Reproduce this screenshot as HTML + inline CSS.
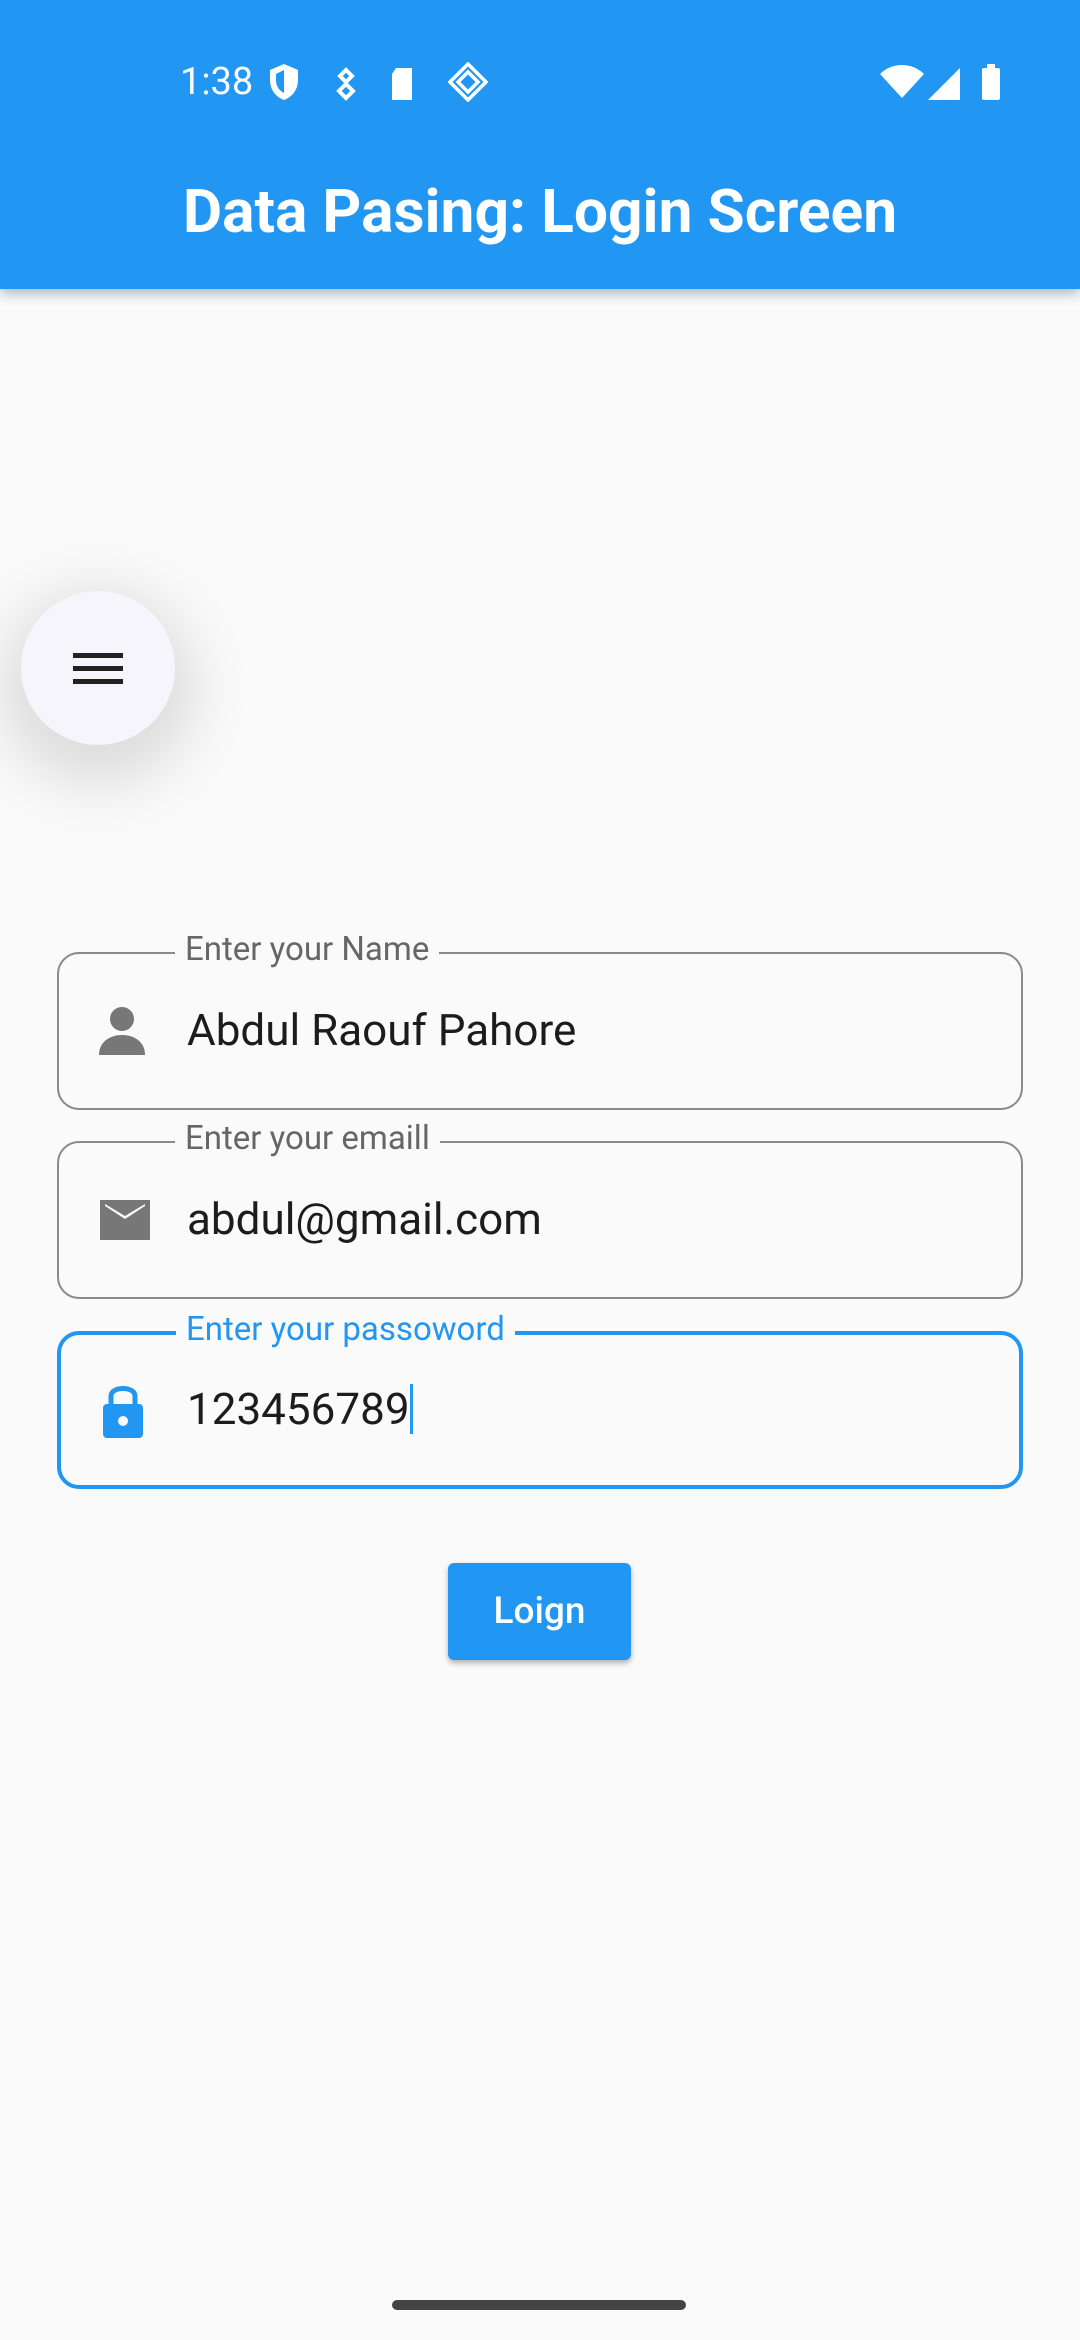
<!DOCTYPE html>
<html><head><meta charset="utf-8"><style>
*{margin:0;padding:0;box-sizing:border-box}
body{width:1080px;height:2340px;background:#fafafa;font-family:"Roboto","Liberation Sans",sans-serif;position:relative;overflow:hidden}
.bar{position:absolute;left:0;top:0;width:1080px;height:289px;background:#2196F3;box-shadow:0 4px 12px rgba(0,0,0,.3)}
.title{position:absolute;left:0;width:1080px;top:176px;text-align:center;color:#fff;font-size:60.5px;font-weight:bold}
.time{position:absolute;left:180px;top:60px;color:#fff;font-size:38px}
.fab{position:absolute;left:21px;top:591px;width:154px;height:154px;border-radius:50%;background:#f6f5fc;box-shadow:0 20px 60px 20px rgba(0,0,0,.12)}
.fab i{position:absolute;left:52px;width:50px;height:5px;background:#222}
.field{position:absolute;left:57px;width:966px;height:158px;border:2.5px solid #8a8a8a;border-radius:22px}
.field.f{border:4px solid #2196F3}
.lbl{position:absolute;left:116px;top:-24px;background:#fafafa;padding:0 10px;font-size:33px;color:#666}
.f .lbl{color:#2196F3;left:115px;top:-25px}
.val{position:absolute;left:128px;top:50px;font-size:44px;color:#1c1c1c}
.f .val{left:126px;top:48px}
.ic{position:absolute;left:38px;top:49px}
.btn{position:absolute;left:448px;top:1563px;width:183px;height:97px;background:#2196F3;border-radius:6px;color:#fff;font-size:37px;font-weight:500;text-align:center;line-height:97px;box-shadow:0 3px 6px rgba(0,0,0,.3)}
.home{position:absolute;left:392px;top:2300px;width:294px;height:10px;border-radius:5px;background:#444}
</style></head><body>
<div class="bar">
<div class="time">1:38</div>
<svg style="position:absolute;left:268px;top:62px" width="200" height="42" viewBox="0 0 200 42" fill="#fff">
<path d="M16 2 L30 8 V18 C30 28 24 35 16 38 C8 35 2 28 2 18 V8 Z M16 8 L8 12 V18 C8 25 12 29 16 31 Z" fill-rule="evenodd"/>
<path d="M78 8 l6 6 -6 6 -6 -6z M78 22 l7 7 -7 7 -7 -7z" fill="none" stroke="#fff" stroke-width="4"/>
<path d="M128 6 H144 V38 H124 V12 Z"/>
</svg>
<svg style="position:absolute;left:448px;top:62px" width="40" height="40" viewBox="0 0 40 40" fill="none" stroke="#fff" stroke-width="3.5"><path d="M20 2 L38 20 L20 38 L2 20Z M20 10 L30 20 L20 30 L10 20Z"/></svg>
<svg style="position:absolute;left:880px;top:64px" width="130" height="38" viewBox="0 0 130 38" fill="#fff">
<path d="M0 10 C12 -2 32 -2 44 10 L22 34Z"/>
<path d="M48 36 L80 4 V36Z"/>
<rect x="102" y="4" width="18" height="32" rx="2"/><rect x="107" y="0" width="8" height="5"/>
</svg>
<div class="title">Data Pasing: Login Screen</div>
</div>
<div class="fab"><i style="top:62px"></i><i style="top:75px"></i><i style="top:88px"></i></div>
<div class="field" style="top:952px"><div class="lbl">Enter your Name</div>
<svg class="ic" width="50" height="56" viewBox="0 0 50 56" fill="#777"><circle cx="25" cy="16" r="12"/><path d="M2 52 C2 38 14 32 25 32 C36 32 48 38 48 52Z"/></svg>
<div class="val">Abdul Raouf Pahore</div></div>
<div class="field" style="top:1141px"><div class="lbl">Enter your emaill</div>
<svg class="ic" width="56" height="56" viewBox="0 0 56 56" fill="#777"><path d="M3 8 H53 V48 H3Z M8 14 L28 27 L48 14 V12 L28 24 L8 12Z" fill-rule="evenodd"/></svg>
<div class="val">abdul@gmail.com</div></div>
<div class="field f" style="top:1331px"><div class="lbl">Enter your passoword</div>
<svg class="ic" style="left:37px;top:45px" width="50" height="62" viewBox="0 0 50 62" fill="#2196F3"><path d="M13 24 V16 C13 6 37 6 37 16 V24" fill="none" stroke="#2196F3" stroke-width="5"/><rect x="5" y="24" width="40" height="34" rx="4"/><circle cx="25" cy="41" r="5" fill="#fafafa"/></svg>
<div class="val">123456789<span style="display:inline-block;width:3px;height:50px;background:#2196F3;vertical-align:-10px"></span></div></div>
<div class="btn">Loign</div>
<div class="home"></div>
</body></html>
